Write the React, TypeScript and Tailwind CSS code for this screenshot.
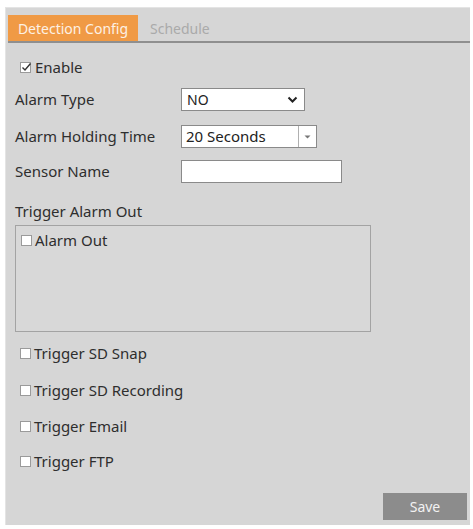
import React from "react";

const font = { fontFamily: '"Segoe UI", "Noto Sans", "Open Sans", sans-serif' };

function Box({ checked = false }: { checked?: boolean }) {
  return (
    <span className="relative inline-block w-[11px] h-[11px] bg-white border border-[#9a9a9a] shrink-0">
      {checked && (
        <svg className="absolute left-0 top-[-1px]" width="11" height="11" viewBox="0 0 11 11">
          <path d="M1.5 5.5 L4 8 L9.5 1.5" fill="none" stroke="#333" strokeWidth="1.4" />
        </svg>
      )}
    </span>
  );
}

function CheckRow({ label, className = "" }: { label: string; className?: string }) {
  return (
    <div className={`flex items-center h-[20px] pl-[14px] gap-[3px] ${className}`}>
      <Box />
      <span className="text-[15px] text-[#2e2e2e] leading-none">{label}</span>
    </div>
  );
}

export default function App() {
  return (
    <div className="w-[473px] h-[529px] bg-white pt-[7px] pl-[5px] pr-[3px] pb-[4px]" style={font}>
      <div className="w-full h-full bg-[#d6d6d6] border-l border-t border-[#e4e4e4] flex flex-col">
        <div className="pt-[7px] pl-[2px]">
          <div className="flex items-end border-b-2 border-[#8f8f8f] h-[28px]">
            <div className="w-[130px] h-[26px] bg-[#f09a45] flex items-center justify-center text-[14px] text-[#fdf1e4]">
              Detection Config
            </div>
            <div className="h-[26px] flex items-center pl-[12px] text-[14px] text-[#aaaaaa]">Schedule</div>
          </div>
        </div>

        <div className="flex items-center h-[20px] mt-[14px] pl-[14px] gap-[4px]">
          <Box checked />
          <span className="text-[15px] text-[#2e2e2e] leading-none">Enable</span>
        </div>

        <div className="flex items-center h-[23px] mt-[11px] pl-[9px]">
          <span className="w-[166px] text-[15px] text-[#2e2e2e]">Alarm Type</span>
          <div className="w-[124px] h-[23px] bg-white border border-[#8a8a8a] flex items-center justify-between pl-[5px] pr-[6px] text-[14px] text-[#222]">
            <span>NO</span>
            <svg width="11" height="8" viewBox="0 0 11 8">
              <path d="M1.5 1.5 L5.5 5.5 L9.5 1.5" fill="none" stroke="#222" strokeWidth="2" />
            </svg>
          </div>
        </div>

        <div className="flex items-center h-[23px] mt-[14px] pl-[9px]">
          <span className="w-[166px] text-[15px] text-[#2e2e2e]">Alarm Holding Time</span>
          <div className="w-[136px] h-[23px] bg-white border border-[#8a8a8a] flex items-stretch text-[15px] text-[#222]">
            <span className="flex-1 flex items-center pl-[4px]">20 Seconds</span>
            <span className="w-[18px] border-l border-[#b0b0b0] flex items-center justify-center">
              <svg width="7" height="4" viewBox="0 0 7 4">
                <path d="M0.5 0.5 L3.5 3.5 L6.5 0.5 Z" fill="#777" />
              </svg>
            </span>
          </div>
        </div>

        <div className="flex items-center h-[23px] mt-[12px] pl-[9px]">
          <span className="w-[166px] text-[15px] text-[#2e2e2e]">Sensor Name</span>
          <div className="w-[161px] h-[23px] bg-white border border-[#8a8a8a]" />
        </div>

        <div className="flex items-center h-[20px] mt-[18px] pl-[9px] text-[15px] text-[#2e2e2e]">
          Trigger Alarm Out
        </div>

        <div className="ml-[9px] mt-[4px] w-[356px] h-[107px] border border-[#a3a3a3] bg-[#d8d8d8] pt-[5px] pl-[5px]">
          <div className="flex items-center h-[18px] gap-[3px]">
            <Box />
            <span className="text-[15px] text-[#2e2e2e] leading-none">Alarm Out</span>
          </div>
        </div>

        <CheckRow label="Trigger SD Snap" className="mt-[11px]" />
        <CheckRow label="Trigger SD Recording" className="mt-[17px]" />
        <CheckRow label="Trigger Email" className="mt-[16px]" />
        <CheckRow label="Trigger FTP" className="mt-[15px]" />

        <div className="flex justify-end mt-[22px] pr-[3px]">
          <div className="w-[84px] h-[27px] bg-[#8c8c8c] flex items-center justify-center text-[14px] text-[#f2f2f2]">
            Save
          </div>
        </div>
      </div>
    </div>
  );
}
